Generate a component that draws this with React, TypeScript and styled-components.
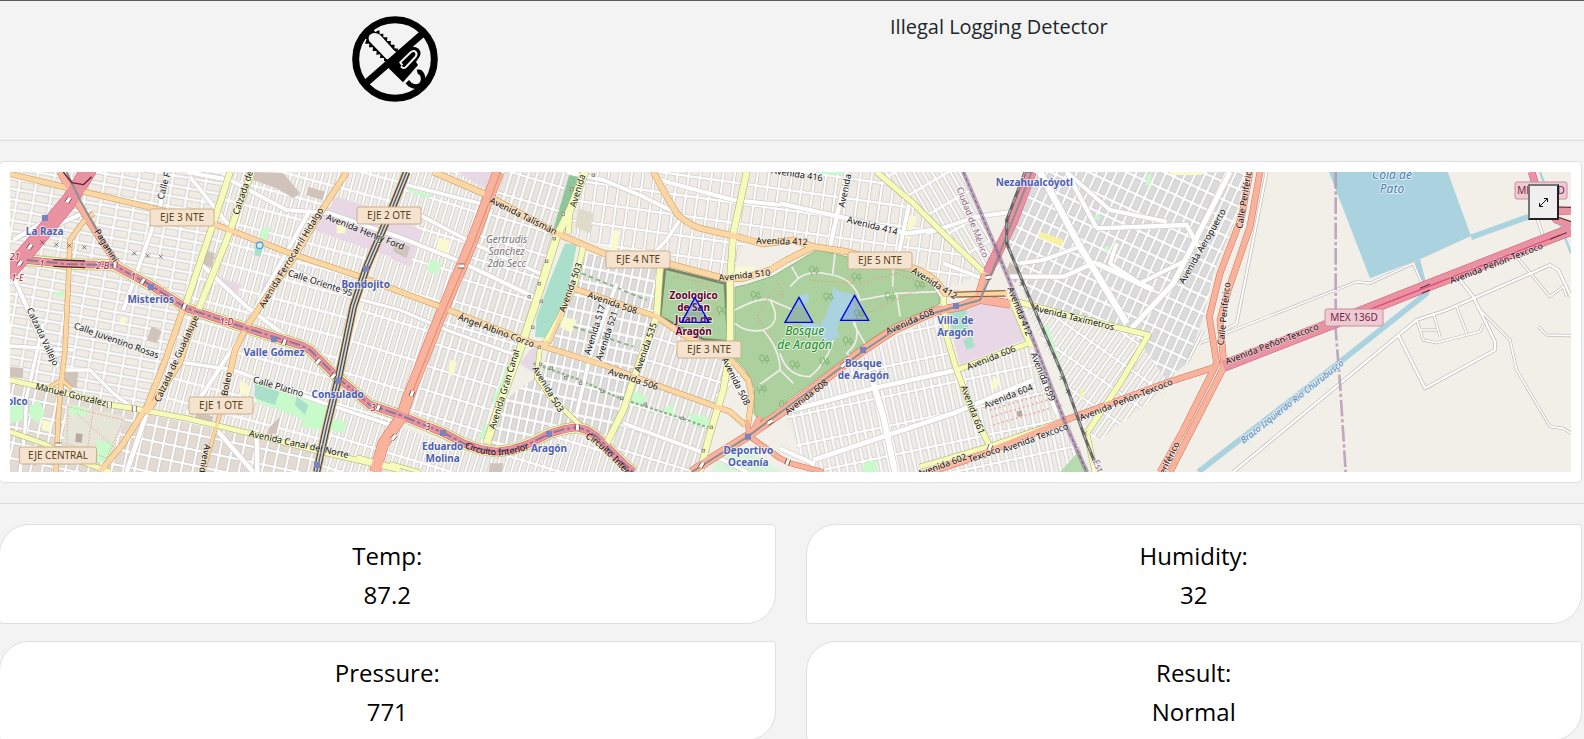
import React from 'react';
import styled, { createGlobalStyle } from 'styled-components';

const GlobalStyle = createGlobalStyle`
  *, *::before, *::after { box-sizing: border-box; }
  body {
    margin: 0;
    background: #f3f3f3;
    color: #212529;
    font-family: "Segoe UI", "Open Sans", "Noto Sans", sans-serif;
    font-size: 16px;
    line-height: 24px;
    overflow-x: hidden;
  }
`;

const Page = styled.main`
  border-top: 1px solid #5c5a5e;
`;

const Header = styled.header`
  display: grid;
  grid-template-columns: 1fr 1fr;
  padding: 14px 0 37px;
`;

const LogoCell = styled.div`
  display: flex;
  justify-content: center;
  padding-right: 2px;
`;

const Logo = styled.svg`
  display: block;
  width: 88px;
  height: 88px;
`;

const Title = styled.h1`
  margin: 0;
  padding-left: 98px;
  font-size: 20px;
  font-weight: 400;
  line-height: 24px;
`;

const Rule = styled.hr`
  margin: 0 0 20px;
  border: 0;
  border-top: 1px solid #dcdcdc;
`;

const Body = styled.div`
  margin: 0 2px 0 -1px;
`;

const MapCard = styled.section`
  position: relative;
  margin-bottom: 20px;
  padding: 10px;
  border: 1px solid #dfdfdf;
  border-radius: 5px;
  background: #fff;
`;

const MapSvg = styled.svg`
  display: block;
  width: 100%;
  height: 300px;
  background: #f2efe9;
  font-family: "Noto Sans", "Open Sans", sans-serif;
`;

const ExpandButton = styled.button`
  position: absolute;
  top: 22px;
  right: 22px;
  display: flex;
  align-items: center;
  justify-content: center;
  width: 31px;
  height: 36px;
  padding: 0;
  border: 2px solid;
  border-color: #767676 #212121 #212121 #767676;
  background: #efefef;
  color: #111;
`;

const Readings = styled.div`
  display: grid;
  grid-template-columns: 1fr 1fr;
  gap: 17px 30px;
`;

const ReadingCard = styled.section`
  padding: 11px 10px 9px;
  border: 1px solid #dfdfdf;
  border-radius: 30px 4px 30px 4px;
  background: #fff;
  color: #000;
  text-align: center;
`;

const ReadingName = styled.h2`
  margin: 0;
  font-size: 24px;
  font-weight: 400;
  line-height: 39px;
`;

const ReadingValue = styled.p`
  margin: 0;
  font-size: 24px;
  line-height: 39px;
`;

type Kind = 'street' | 'track' | 'secondary' | 'primary' | 'trunk' | 'motorway';

const roadColors: Record<Kind, [string, string]> = {
  street: ['#ffffff', '#cfccc8'],
  track: ['#ffffff', '#bdbab6'],
  secondary: ['#f6fabb', '#a9b163'],
  primary: ['#fcd6a4', '#c79a54'],
  trunk: ['#f9b29c', '#d2745a'],
  motorway: ['#e892a2', '#d4577c'],
};

const Line = styled.path`
  fill: none;
  stroke-linejoin: round;
`;

const MapText = styled.text<{ $tone?: string; $size?: number; $bold?: boolean; $italic?: boolean; $halo?: string }>`
  fill: ${(p) => p.$tone ?? '#111'};
  font-size: ${(p) => p.$size ?? 9}px;
  font-weight: ${(p) => (p.$bold ? 700 : 400)};
  font-style: ${(p) => (p.$italic ? 'italic' : 'normal')};
  stroke: ${(p) => p.$halo ?? 'none'};
  stroke-width: 2px;
  stroke-linejoin: round;
  paint-order: stroke;
  text-anchor: middle;
`;

/* Map geometry is stored in thirds of a pixel. */
const UNIT = 3;

const CIRCUITO = 'M80 330L200 342L340 345L450 405L560 475L740 535L900 585L930 600L1010 680L1110 765L1200 795L1330 848L1390 880L1440 897L1490 905L1540 897L1590 880L1650 850L1690 838L1730 832L1760 840L1790 860L1870 940L1900 966';

const roads: [Kind, number, string][] = [
  ['street', 13, 'M45 390L110 540L175 650'],
  ['street', 11, 'M30 588L220 600M500 630L700 660L960 755L1200 835'],
  ['street', 12, 'M560 66L690 90L860 180L990 190L1200 262L1370 330L1600 440'],
  ['street', 10, 'M860 350L1050 440L1200 480L1340 540L1560 620'],
  ['street', 10, 'M190 660L270 660L340 730L400 775M130 520L80 740L75 840L60 966'],
  ['street', 14, 'M440 790L380 966M650 840L760 966M770 840L772 966'],
  ['street', 12, 'M500 66L480 170L370 480M600 340L740 470L860 560L1000 650'],
  ['street', 12, 'M930 180L780 450L740 530M720 560L610 730L560 790'],
  ['street', 12, 'M70 270L270 180M40 270L140 210M570 80L690 230'],
  ['street', 11, 'M1250 190L1440 290L1620 370M1200 100L1480 170'],
  ['street', 12, 'M1700 66L1810 90L1930 140L2030 190M1980 90L2200 150L2340 165'],
  ['street', 11, 'M2045 200L2000 270L1960 310M1850 400L1770 620L1730 790'],
  ['street', 11, 'M1870 820L2170 930L2240 966M2150 740L2280 610M2200 600L2240 690'],
  ['street', 13, 'M2340 160L2540 205L2720 250L2800 240M2540 66L2490 290'],
  ['street', 12, 'M2730 150L2690 340M2780 250L2930 200L3040 185M2830 340L2960 390'],
  ['street', 20, 'M3120 66L3240 290L3380 520'],
  ['street', 13, 'M3030 380L3190 380L3290 335M3290 235L3560 225L3600 300M3290 235L3200 66'],
  ['street', 12, 'M3200 66L3330 180L3500 215M3240 290L3130 330L3060 340M3350 280L3330 340L3420 400L3560 330'],
  ['street', 16, 'M3690 66L3520 400L3390 540M3290 340L3460 420'],
  ['street', 14, 'M2340 790L2620 715L2870 660M2440 930L2860 790L3100 690'],
  ['street', 18, 'M2620 700L2650 800L2685 966'],
  ['street', 12, 'M3095 600L3170 790M2340 895L2440 940L2430 966'],
  ['track', 7, 'M3700 966L4250 510L4340 480L4650 345L4675 360L4713 440'],
  ['track', 7, 'M4195 555L4275 715L4485 600L4485 575L4420 440L4380 390'],
  ['track', 5, 'M3600 580L4070 395L4110 400L4240 340L4270 410'],
  ['track', 5, 'M4430 470L4530 570L4550 660L4650 830L4690 835L4713 850'],
  ['track', 5, 'M4550 320L4650 440L4690 410L4700 440M4615 530L4640 555L4713 557'],
  ['track', 5, 'M4250 510L4270 570L4310 578L4440 545L4450 520M4370 470L4400 550M4260 540L4310 540M4300 490L4320 560'],
  ['track', 6, 'M3800 66L3710 520L3640 560M3610 540L3560 640M4610 200L4630 260'],
  ['secondary', 15, 'M30 690L180 725L330 765L400 775L560 805L750 850L960 905L1200 960'],
  ['secondary', 14, 'M30 845L130 880L230 930L330 966'],
  ['secondary', 18, 'M690 66L640 220L555 470'],
  ['secondary', 18, 'M755 66L680 270L595 480'],
  ['secondary', 22, 'M1755 66L1710 180L1670 260L1610 450L1560 600L1500 760L1460 880'],
  ['secondary', 16, 'M1710 180L1705 250M1750 290L1725 400L1680 500L1630 590'],
  ['secondary', 13, 'M1620 590L1610 680L1650 740L1740 825'],
  ['secondary', 19, 'M1980 350L1970 500L1910 660L1870 780L1820 880'],
  ['secondary', 19, 'M2240 66L2200 250L2190 390L2190 600L2170 720L2130 850L2100 966'],
  ['secondary', 16, 'M2630 66L2740 160L2840 260L2955 370'],
  ['secondary', 16, 'M3030 440L3080 560L3095 590'],
  ['secondary', 16, 'M2830 440L2840 560L2870 660L2920 790L2970 890'],
  ['secondary', 15, 'M2870 660L3090 578'],
  ['secondary', 16, 'M3050 455L3240 505L3445 555L3360 700L3260 850L3285 966'],
  ['secondary', 14, 'M2760 950L2980 885L3210 805'],
  ['secondary', 10, 'M1200 955L1070 920M1170 940L1260 966'],
  ['primary', 15, 'M30 72L230 120L450 172L650 225L870 310L1080 380L1200 425L1320 470L1600 580L1810 645L2010 720L2190 785L2235 825'],
  ['primary', 13, 'M280 190L250 215L210 270L205 400L195 600L185 690L175 800L168 966'],
  ['primary', 10, 'M150 710L185 690L215 715'],
  ['primary', 16, 'M550 475L500 620L440 770L370 880L300 966'],
  ['primary', 14, 'M590 490L540 640L440 790'],
  ['primary', 16, 'M1040 66L960 190L890 310L800 440L740 530L705 600L690 670'],
  ['primary', 9, 'M690 670L670 760L640 860L610 966'],
  ['primary', 17, 'M1300 66L1450 130L1670 250L1810 310L2020 345L2170 385L2230 385L2310 360L2360 330L2440 290'],
  ['primary', 17, 'M1960 66L1995 130L2030 190Q2060 222 2100 235L2230 265L2290 282L2380 270L2440 290L2540 305L2730 352Q2800 370 2835 430L2880 433L3020 430'],
  ['primary', 15, 'M1720 415L1970 500L2050 555L2190 625L2245 690L2255 740L2245 820'],
  ['primary', 10, 'M1720 415L1680 500L1650 575L1615 582'],
  ['trunk', 18, 'M180 66L240 170L290 250L350 340'],
  ['trunk', 32, 'M1495 66L1410 290L1320 500L1225 740L1205 800L1150 880L1125 966'],
  ['trunk', 24, 'M3030 462L2940 448L2880 470L2800 485L2680 540L2590 600L2340 790L2240 860L2120 935L2075 966'],
  ['trunk', 14, 'M2240 810L2250 860L2340 925L2370 940L2470 966M2280 800L2250 860'],
  ['trunk', 18, 'M2955 370L2930 450'],
  ['trunk', 17, 'M2760 976L2900 930L3040 875L3210 805L3510 695L3650 650'],
  ['trunk', 17, 'M3750 66L3725 200L3660 370L3628 500L3650 640L3550 840L3480 966'],
  ['trunk', 17, 'M3780 66L3750 230L3685 420L3660 510L3672 650L3580 830L3510 966'],
  ['motorway', 46, 'M268 56L210 150L110 270L20 375'],
  ['motorway', 20, CIRCUITO],
  ['motorway', 28, 'M3095 66L3040 210L2962 370'],
  ['motorway', 32, 'M3670 648L3960 535L4130 468L4270 412L4680 252L4713 240'],
  ['motorway', 20, 'M4595 66L4620 150L4670 210L4713 225M4640 185L4713 182'],
];

interface GridProps { id: string; angle: number; w: number; h: number; block: string }

const grids: GridProps[] = [
  { id: 'west', angle: 10, w: 50, h: 31, block: '#f0ece5' },
  { id: 'centre', angle: 15, w: 23, h: 62, block: '#efebe4' },
  { id: 'southwest', angle: 12, w: 34, h: 46, block: '#e3dad1' },
  { id: 'rail', angle: 17, w: 22, h: 96, block: '#ede9e3' },
  { id: 'canal', angle: 17, w: 25, h: 70, block: '#e9e6e1' },
  { id: 'dense', angle: 12, w: 24, h: 44, block: '#dedcda' },
  { id: 'north', angle: 8, w: 34, h: 60, block: '#efebe4' },
  { id: 'slope', angle: -30, w: 24, h: 80, block: '#eeebe6' },
  { id: 'south', angle: -12, w: 25, h: 88, block: '#efece7' },
  { id: 'neza', angle: 25, w: 27, h: 48, block: '#dcdbdc' },
  { id: 'taxi', angle: 35, w: 24, h: 76, block: '#efece6' },
];

const districts: [string, string][] = [
  ['west', '30,66 690,66 560,470 430,780 380,800 30,690'],
  ['southwest', '30,690 430,790 960,905 930,966 30,966'],
  ['centre', '690,66 1220,66 1098,356 1014,690 960,905 430,780 560,470'],
  ['rail', '1220,66 1495,66 1320,500 1170,860 1135,966 950,966 1014,690'],
  ['canal', '1495,66 1755,66 1560,600 1460,880 1400,870 1220,780 1320,500'],
  ['rail', '1135,966 1170,820 1400,900 1730,850 1890,966'],
  ['north', '1755,66 1960,66 2100,235 2240,265 2190,385 1990,340 1690,250'],
  ['dense', '1760,310 1980,350 1970,500 1870,780 1820,880 1740,825 1620,680 1650,580'],
  ['dense', '1500,760 1610,680 1730,825 1490,890 1440,880'],
  ['north', '1960,66 2630,66 2955,370 2835,420 2730,352 2440,290 2230,265 2100,235'],
  ['canal', '1970,510 2180,630 2160,780 2100,966 1900,966 1820,880'],
  ['slope', '2630,66 2890,66 3010,350 2955,370'],
  ['south', '2360,800 2600,610 2800,500 2840,560 2970,890 2760,966 2420,966'],
  ['south', '2870,660 3095,590 3200,805 2970,885'],
  ['south', '2980,900 3210,820 3270,966 2780,966'],
  ['neza', '3110,66 3700,66 3390,540 3080,450 3020,280'],
  ['taxi', '3070,460 3445,555 3270,850'],
  ['taxi', '3445,555 3530,690 3300,870 3260,850'],
  ['neza', '3690,66 3735,66 3710,200 3640,370 3610,500 3560,640 3500,690 3390,540'],
];

const areas: [string, string][] = [
  ['#e8d8e6', '1010,140 1200,200 1200,330 940,240'],
  ['#e8d8e6', '1370,66 1490,66 1462,120'],
  ['#e8d8e6', '1190,200 1265,240 1230,350 1170,325'],
  ['#e8d8e6', '645,375 725,405 700,445'],
  ['#e8d8e6', '870,330 830,400 780,440 790,400'],
  ['#e8d8e6', '1590,600 1615,590 1615,680 1560,640'],
  ['#e8d8e6', '2840,490 2950,458 3030,470 3085,565 2880,645'],
  ['#aae0cb', '1695,280 1730,285 1705,420 1650,565 1605,560 1610,500 1650,390'],
  ['#aae0cb', '2850,480 2900,480 2905,540 2855,565'],
  ['#aae0cb', '2890,570 2915,558 2925,590 2900,600'],
  ['#8fc59a', '1710,66 1740,66 1680,240 1660,240'],
  ['#c8facc', '765,700 980,770 965,835 840,780 770,755'],
  ['#aae0cb', '765,702 838,725 825,765 765,745'],
  ['#aae0cb', '890,740 925,765 915,795 885,765'],
  ['#c8facc', '910,808 965,820 962,840 905,830'],
  ['#c8facc', '990,805 1040,815 1030,850 985,840'],
  ['#c8facc', '780,240 810,232 800,270 785,270'],
  ['#aae0cb', '765,290 790,290 782,320 762,315'],
  ['#c8facc', '165,425 198,422 198,440 170,440'],
  ['#c8facc', '30,750 70,750 70,810 30,820'],
  ['#c8facc', '90,770 115,750 135,790 115,820 88,800'],
  ['#e6e6d8', '200,760 380,800 320,940 190,880'],
  ['#c8facc', '290,870 340,880 320,940 290,935'],
  ['#c8facc', '210,765 265,775 255,800 205,790'],
  ['#c8facc', '1525,640 1540,640 1500,760 1475,760'],
  ['#c8facc', '1460,820 1475,825 1450,870 1435,860'],
  ['#c8facc', '1225,115 1290,135 1288,147 1225,125'],
  ['#c8facc', '1290,330 1325,340 1310,375 1280,360'],
  ['#c8facc', '1900,720 1940,740 1930,770 1895,760'],
  ['#c8facc', '2065,790 2120,800 2135,830 2080,825'],
  ['#c8facc', '1995,770 2020,765 2020,800 1995,790'],
  ['#c8facc', '2590,940 2630,930 2630,966 2590,966'],
  ['#b5dcae', '3180,966 3240,900 3265,966'],
  ['#c8facc', '3130,525 3145,530 3200,700 3190,710'],
  ['#c8facc', '2460,66 2540,66 2540,75 2460,72'],
  ['#c8facc', '3440,75 3455,70 3450,110 3438,105'],
  ['#c8facc', '3285,195 3298,193 3298,208 3286,210'],
  ['#c8facc', '3315,290 3327,288 3327,302 3316,304'],
  ['#c8facc', '3222,250 3245,290 3250,320 3230,290'],
  ['#d8f5dc', '2130,966 2160,910 2240,890 2340,966'],
  ['#cfc3bb', '765,66 850,70 900,130 880,145 830,115 760,90'],
  ['#cfc3bb', '925,110 975,125 965,150 920,135'],
  ['#cfc3bb', '612,300 645,310 635,355 605,340'],
  ['#cfc3bb', '455,530 485,542 470,580 440,570'],
  ['#cfc3bb', '195,660 235,665 230,715 195,705'],
  ['#cfc3bb', '30,650 70,655 68,685 30,680'],
  ['#cfc3bb', '810,830 840,800 830,850 800,855'],
  ['#cfc3bb', '590,780 640,800 635,815 585,805'],
  ['#cfc3bb', '1470,940 1510,940 1505,966 1465,966'],
  ['#cfc3bb', '3030,335 3065,370 3045,400 3020,360'],
  ['#cfc3bb', '1180,270 1230,290 1220,325 1180,305'],
  ['#b8a8a0', '3050,785 3065,780 3068,798 3053,800'],
  ['#b8a8a0', '228,850 248,852 245,878 226,875'],
  ['#dfdbca', '1735,175 1780,190 1770,250 1725,230'],
  ['#fafad0', '1840,240 1860,245 1850,300 1830,300'],
  ['#fafad0', '2210,350 2270,350 2230,380 2200,370'],
  ['#fafad0', '2725,195 2750,200 2730,270 2705,260'],
  ['#f8f2a0', '3120,245 3190,270 3185,290 3115,262'],
  ['#f8f2a0', '3240,725 3250,715 3250,740 3242,745'],
  ['#fafad0', '1315,265 1350,270 1340,320 1305,310'],
  ['#fafad0', '1350,630 1370,635 1360,680 1345,670'],
  ['#fafad0', '1690,500 1730,510 1715,550 1680,530'],
  ['#fafad0', '1010,220 1040,225 1035,250 1010,250'],
  ['#fafad0', '365,500 380,505 375,525 358,515'],
  ['#fafad0', '720,690 750,710 745,740 720,730'],
  ['#fafad0', '125,810 155,815 150,845 125,840'],
  ['#fafad0', '2980,680 2998,690 2990,720 2975,710'],
  ['#fafad0', '3510,66 3610,66 3605,75 3510,75'],
  ['#aad3df', '3987,66 4343,66 4413,258 4260,328 4110,385'],
];

const BOSQUE = 'M2205 412L2240 404L2320 378L2370 348L2450 300L2530 318L2730 366L2790 398L2818 440L2818 462L2680 524L2580 590L2340 768L2285 820L2262 790L2264 715L2240 665L2205 625Z';

const trees: [number, number][] = [
  [2265, 437], [2440, 362], [2568, 382], [2757, 405], [2668, 440], [2483, 442], [2575, 492],
  [2542, 574], [2472, 635], [2382, 645], [2291, 628], [2283, 717], [2163, 482], [2350, 765],
];

/* Text, start x/y, end x/y in map units. */
const roadLabels: [string, number, number, number, number][] = [
  ['Paganini', 290, 240, 348, 334],
  ['Calle F', 482, 145, 502, 70],
  ['Calzada de', 708, 190, 750, 66],
  ['Avenida Henry Ford', 980, 200, 1212, 292],
  ['Avenida Ferrocarril Hidalgo', 785, 468, 962, 178],
  ['Calle Oriente 95', 866, 368, 1056, 430],
  ['Calle Juventino Rosas', 225, 527, 473, 616],
  ['Calzada Vallejo', 88, 476, 168, 644],
  ['Calzada de Guadalupe', 472, 752, 588, 500],
  ['Manuel González', 107, 708, 318, 760],
  ['Boleo', 673, 735, 686, 668],
  ['Calle Platino', 760, 688, 910, 732],
  ['Avenida Canal del Norte', 748, 850, 1045, 915],
  ['Avenid', 623, 885, 607, 966],
  ['Avenida Talismán', 1472, 150, 1668, 246],
  ['Avenida', 1718, 170, 1748, 74],
  ['Avenida 503', 1686, 485, 1738, 340],
  ['Avenida 508', 1765, 434, 1910, 484],
  ['Avenida 517', 1762, 612, 1808, 466],
  ['Avenida 521', 1797, 628, 1844, 486],
  ['Avenida 535', 1912, 664, 1962, 520],
  ['Avenida 510', 2157, 384, 2310, 368],
  ['Avenida 412', 2270, 272, 2422, 276],
  ['Ángel Albino Corzo', 1375, 500, 1602, 584],
  ['Avenida Gran Canal', 1476, 836, 1550, 600],
  ['Avenida 503', 1606, 655, 1682, 780],
  ['Avenida 506', 1826, 663, 1974, 712],
  ['Avenida 508', 2175, 630, 2240, 758],
  ['Avenida 416', 2318, 62, 2464, 84],
  ['Avenida', 2524, 174, 2545, 70],
  ['Avenida 414', 2542, 208, 2692, 246],
  ['Avenida 608', 2660, 545, 2800, 484],
  ['Avenida 608', 2358, 788, 2480, 694],
  ['Avenida 412', 2738, 360, 2868, 440],
  ['Avenida 412', 3030, 412, 3088, 556],
  ['Avenida Taxímetros', 3102, 473, 3342, 532],
  ['Avenida 606', 2902, 652, 3045, 595],
  ['Avenida 604', 2953, 768, 3097, 710],
  ['Avenida 699', 3100, 608, 3158, 752],
  ['Avenida 661', 2890, 706, 2946, 852],
  ['Avenida 602', 2756, 972, 2897, 920],
  ['Texcoco', 2905, 930, 3000, 897],
  ['Avenida Texcoco', 3010, 900, 3202, 828],
  ['Avenida Peñón-Texcoco', 3238, 805, 3518, 694],
  ['Avenida Peñón-Texcoco', 3676, 636, 3956, 528],
  ['Avenida Peñón-Texcoco', 4350, 394, 4628, 286],
  ['Calle Periféric', 3718, 234, 3746, 66],
  ['Calle Periférico', 3662, 582, 3682, 400],
  ['Avenida Aeropuerto', 3545, 398, 3670, 180],
  ['eriférico', 3485, 972, 3532, 876],
];

const refLabels: [string, number, number][] = [
  ['21', 44, 318], ['1', 126, 340], ['2-B', 308, 346], ['1-E', 52, 382],
  ['1', 400, 378], ['1-D', 680, 514], ['3', 1120, 772], ['3', 1284, 828],
];

const stations: [string[], number, number, number, number][] = [
  [['La Raza'], 134, 243, 135, 204],
  [['Misterios'], 452, 448, 453, 411],
  [['Bondojito'], 1097, 402, 1098, 356],
  [['Valle Gómez'], 822, 607, 822, 567],
  [['Consulado'], 1013, 731, 1014, 692],
  [['Eduardo', 'Molina'], 1328, 888, 1329, 849],
  [['Aragón'], 1647, 893, 1647, 852],
  [['Deportivo', 'Oceanía'], 2245, 901, 2244, 860],
  [['Bosque', 'de Aragón'], 2590, 640, 2589, 600],
  [['Villa de', 'Aragón'], 2866, 509, 2868, 468],
  [['Nezahualcóyotl'], 3103, 95, 3090, 60],
  [['olco'], 52, 752, 0, 752],
];

const shields: [string, number, number, number, boolean][] = [
  ['EJE 3 NTE', 547, 202, 64, false],
  ['EJE 2 OTE', 1168, 195, 64, false],
  ['EJE 1 OTE', 664, 765, 64, false],
  ['EJE CENTRAL', 174, 915, 77, false],
  ['EJE 4 NTE', 1915, 327, 64, false],
  ['EJE 3 NTE', 2128, 597, 64, false],
  ['EJE 5 NTE', 2639, 331, 64, false],
  ['MEX 136D', 4063, 502, 58, true],
  ['MEX 136D', 4624, 120, 52, true],
];

const crossings: [number, number, number][] = [
  [205, 150, 35], [90, 290, 35], [60, 340, 35], [345, 345, 0], [428, 394, 30], [553, 470, 20],
  [853, 576, 20], [955, 634, 40], [1000, 678, 40], [1135, 773, 20], [1384, 348, 90], [1236, 731, 20],
  [1181, 862, 40], [1732, 832, 0], [2105, 945, 30], [2310, 816, 60], [2530, 645, 50], [2965, 382, 80],
  [2363, 936, 20], [2970, 892, 20], [403, 776, 0], [328, 764, 0], [175, 885, 90],
];

const sensors = ['M2085 443L2045 517L2127 517Z', 'M2397 442L2355 517L2438 517Z', 'M2564 436L2522 511L2606 511Z'];

function StreetGrid({ id, angle, w, h, block }: GridProps) {
  const path = `M${w / 2} 0V${h}M0 ${h / 2}H${w}`;
  return (
    <pattern id={id} width={w} height={h} patternUnits="userSpaceOnUse" patternTransform={`rotate(${angle})`}>
      <rect width={w} height={h} fill={block} />
      <Line d={path} stroke="#c4c1bf" strokeWidth={11} />
      <Line d={path} stroke="#fff" strokeWidth={7} />
    </pattern>
  );
}

function RoadLabel({ text, from, to, tone, italic, halo, size }: {
  text: string; from: [number, number]; to: [number, number];
  tone?: string; italic?: boolean; halo?: string; size?: number;
}) {
  const x = (from[0] + to[0]) / 2 / UNIT;
  const y = (from[1] + to[1]) / 2 / UNIT;
  const angle = (Math.atan2(to[1] - from[1], to[0] - from[0]) * 180) / Math.PI;
  return (
    <MapText $tone={tone} $italic={italic} $halo={halo} $size={size} dy={3} transform={`translate(${x} ${y}) rotate(${angle})`}>
      {text}
    </MapText>
  );
}

function PlaceLabel({ lines, x, y, tone, size = 10, bold, italic, pitch = 12 }: {
  lines: string[]; x: number; y: number; tone: string; size?: number; bold?: boolean; italic?: boolean; pitch?: number;
}) {
  return (
    <>
      {lines.map((line, i) => (
        <MapText key={line} x={x / UNIT} y={y / UNIT + 4 + i * pitch} $tone={tone} $size={size} $bold={bold} $italic={italic} $halo="rgba(255,255,255,0.65)">
          {line}
        </MapText>
      ))}
    </>
  );
}

function StreetMap() {
  return (
    <MapSvg viewBox="0 0 1561 300" preserveAspectRatio="xMidYMid slice" role="img" aria-label="Sensor map">
      <defs>
        {grids.map((g) => <StreetGrid key={g.id} {...g} />)}
        <path id="circuito-west" d="M451 274Q487 292 523 275" />
        <path id="circuito-east" d="M569 263Q590 271 622 310" />
      </defs>
      <g transform="translate(-10 -22)">
        <g transform={`scale(${1 / UNIT})`}>
          {districts.map(([grid, points]) => <polygon key={points} points={points} fill={`url(#${grid})`} />)}
          {areas.map(([fill, points]) => <polygon key={points} points={points} fill={fill} />)}
          <Line d="M205 770L370 810L320 925L200 880ZM230 790L350 900M280 780L260 910" stroke="#f29a90" strokeWidth={3} strokeDasharray="4 5" />
          <Line d="M2970 780L3170 720M2975 800L3175 740M2980 825L3185 765" stroke="#f2a59a" strokeWidth={5} strokeDasharray="5 9" />
          <Line d="M1600 640L1740 690L1860 745L2060 810L2130 835" stroke="#8fb58a" strokeWidth={7} strokeDasharray="9 6" />
          <Line d="M1745 370L1940 450M1720 530L1900 590" stroke="#8fb58a" strokeWidth={6} strokeDasharray="14 9" />
          <Line d="M4413 262L4585 200M4252 330L4270 400L4280 430L4040 620L3595 966" stroke="#aad3df" strokeWidth={17} />
          <Line d="M4620 66L4713 310" stroke="#aad3df" strokeWidth={7} />

          {roads.filter(([k]) => k === 'street' || k === 'track').map(([kind, width, d]) => (
            <Line key={d} d={d} stroke={roadColors[kind][1]} strokeWidth={width + 4} />
          ))}
          {roads.filter(([k]) => k === 'street' || k === 'track').map(([kind, width, d]) => (
            <Line key={d} d={d} stroke={roadColors[kind][0]} strokeWidth={width} />
          ))}

          <path d="M1995 355L2175 400L2185 575L2110 568L1980 500Z" fill="#add19e" stroke="#79866a" strokeWidth={8} />
          <path d={BOSQUE} fill="#add19e" stroke="#8cba80" strokeWidth={3} />
          <path d="M2500 412L2522 425L2555 432L2566 470L2575 500L2520 512L2510 540L2520 560L2480 578L2462 560L2410 545L2405 520L2460 525L2475 500L2490 460Z" fill="#aad3df" />
          <path d="M2400 435L2425 432L2428 450L2400 475L2390 460Z" fill="#aad3df" />
          <Line d="M2375 350L2395 385L2370 410M2395 385Q2430 360 2480 372Q2560 380 2580 450L2690 430L2810 425M2505 310L2498 372M2680 340L2678 410M2690 430L2700 500M2560 510Q2590 570 2540 610L2580 640M2205 480Q2280 440 2310 450Q2350 520 2290 540Q2240 550 2205 520M2310 450L2380 480M2290 540Q2340 600 2340 660L2380 700M2270 710L2340 660M2340 610Q2360 680 2430 680Q2480 640 2500 570M2560 520L2600 590" stroke="#f2ecea" strokeWidth={5} />
          <Line d="M2330 390L2350 440L2320 420L2270 500L2310 560M2430 390L2560 400L2540 370M2580 400L2690 370L2800 410M2600 490L2750 420M2020 380L2120 400L2150 470L2110 540M2010 440L2060 500L2100 400" stroke="#eb9a86" strokeWidth={3} strokeDasharray="5 6" />
          {trees.map(([x, y]) => (
            <g key={`${x}-${y}`} transform={`translate(${x} ${y})`} fill="none" stroke="#86b57a" strokeWidth={3}>
              <ellipse cx={-5} cy={-4} rx={7} ry={9} />
              <path d="M-5 5V14M10 -12L3 4H17ZM10 4V12" />
            </g>
          ))}

          <Line d={CIRCUITO} stroke="#b9bf75" strokeWidth={34} />
          <Line d={CIRCUITO} stroke="#f6fabb" strokeWidth={30} />
          {roads.filter(([k]) => k !== 'street' && k !== 'track').map(([kind, width, d]) => (
            <Line key={d} d={d} stroke={roadColors[kind][1]} strokeWidth={width + 3} />
          ))}
          {roads.filter(([k]) => k !== 'street' && k !== 'track').map(([kind, width, d]) => (
            <Line key={d} d={d} stroke={roadColors[kind][0]} strokeWidth={width} />
          ))}
          <Line d="M2860 427L3015 422M2860 441L3015 438" stroke="#7a5a35" strokeWidth={3} />
          <Line d="M4100 482L4680 255" stroke="#e0487c" strokeWidth={4} />
          <Line d="M4260 415L4290 402M4265 430L4290 420M4650 170L4713 172M4640 190L4713 215M4650 268L4700 248" stroke="#4a2a35" strokeWidth={3} />
          <Line d="M1502 66L1417 290L1327 500L1232 740" stroke="#d2745a" strokeWidth={2} />
          <Line d="M200 66L240 150L290 240L345 330M2075 966L2240 862L2590 603L2680 543L2800 490L2940 450L2975 370L3095 66" stroke="#8f8f8f" strokeWidth={6} />
          <Line d={CIRCUITO} stroke="#8b7b88" strokeWidth={6} strokeDasharray="34 8 10 8" />
          <Line d="M160 329L255 333M160 349L255 353" stroke="#5b2434" strokeWidth={4} />
          <Line d="M190 66L215 98L250 104L275 80" stroke="#5b2434" strokeWidth={4} />

          <Line d="M1220 66L1180 165L1098 356L1060 470L1014 690L980 830L950 966" stroke="#c79a54" strokeWidth={25} />
          <Line d="M1220 66L1180 165L1098 356L1060 470L1014 690L980 830L950 966" stroke="#3f3f3f" strokeWidth={20} />
          <Line d="M1220 66L1180 165L1098 356L1060 470L1014 690L980 830L950 966" stroke="#d6d6d6" strokeWidth={14} />
          <Line d="M1220 66L1180 165L1098 356L1060 470L1014 690L980 830L950 966" stroke="#555" strokeWidth={4} />

          <Line d="M3075 66L3020 210L3020 280L3070 400L3190 680L3250 850L3285 940" stroke="#666" strokeWidth={9} />
          <Line d="M3075 66L3020 210L3020 280L3070 400L3190 680L3250 850L3285 940" stroke="#aaa" strokeWidth={4} strokeDasharray="20 20" />
          <Line d="M2890 66L2990 300L3100 570L3200 830L3260 966" stroke="#9a789b" strokeOpacity={0.6} strokeWidth={13} />
          <Line d="M2890 66L2990 300L3100 570L3200 830L3260 966" stroke="#7c5880" strokeWidth={3} strokeDasharray="12 6" />
          <Line d="M4007 66V540L4020 700L4037 966" stroke="#b496b4" strokeOpacity={0.8} strokeWidth={8} strokeDasharray="50 8 10 8" />
          {[[127, 277], [169, 284], [208, 287], [253, 292], [403, 310], [443, 317], [482, 320], [3022, 214], [3022, 279], [3065, 402], [3185, 684], [3203, 724], [3255, 850]].map(([x, y]) => (
            <Line key={`${x}-${y}`} d={`M${x - 6} ${y - 6}l12 12m0 -12l-12 12`} stroke="#444" strokeWidth={2} />
          ))}
          {[[1715, 118], [1690, 192], [1663, 266], [1640, 334], [1618, 401], [1588, 440], [1624, 454], [1598, 532], [1618, 592], [1622, 643], [1654, 655], [1697, 683], [1742, 700], [1807, 724], [1865, 745], [1936, 763], [2047, 805], [2134, 832], [2110, 902], [1780, 76]].map(([x, y]) => (
            <rect key={`${x}-${y}`} x={x - 4} y={y - 4} width={8} height={8} fill="#ddd" stroke="#777" strokeWidth={2} />
          ))}
          <circle cx={779} cy={286} r={10} fill="#d7ebf7" stroke="#4aa5e8" strokeWidth={4} />
          {crossings.map(([x, y, a]) => (
            <g key={`${x}-${y}`} transform={`translate(${x} ${y}) rotate(${a})`}>
              <rect x={-5} y={-8} width={10} height={16} fill="#fff" />
              <Line d="M-6 -9V9M6 -9V9" stroke="#4d3434" strokeWidth={2} />
            </g>
          ))}
          {stations.map(([, , , x, y]) => <rect key={`${x}-${y}`} x={x - 9} y={y - 9} width={18} height={18} fill="#7a83bd" />)}
          <rect x={942} y={936} width={18} height={18} fill="#7a83bd" />
        </g>

        {roadLabels.map(([text, x1, y1, x2, y2]) => (
          <RoadLabel key={`${text}-${x1}`} text={text} from={[x1, y1]} to={[x2, y2]} halo="rgba(255,255,255,0.35)" />
        ))}
        <RoadLabel text="Ciudad de México" from={[2873, 100]} to={[2962, 334]} tone="#8a6a8c" halo="#f7f4f0" />
        <RoadLabel text="Est" from={[3286, 930]} to={[3302, 966]} tone="#8a6a8c" halo="#f7f4f0" />
        <RoadLabel text="Brazo Izquierdo Río Churubusco" from={[3708, 888]} to={[4044, 622]} tone="#4d80b3" italic halo="#e4eef2" size={9} />
        {refLabels.map(([text, x, y]) => <PlaceLabel key={`${text}-${x}`} lines={[text]} x={x} y={y} tone="#a8182c" size={9} italic />)}
        <PlaceLabel lines={['Gertrudis', 'Sanchez', '2da Secc']} x={1520} y={267} tone="#777" italic />
        <PlaceLabel lines={['Zoologico', 'de San', 'Juan de', 'Aragón']} x={2081} y={435} tone="#660033" bold />
        <PlaceLabel lines={['Bosque', 'de Aragón']} x={2414} y={543} tone="#158a1c" size={12} italic pitch={14} />
        <PlaceLabel lines={['Cola de', 'Pato']} x={4176} y={76} tone="#4d80b3" size={12} italic pitch={14} />
        {stations.map(([lines, x, y]) => <PlaceLabel key={lines.join()} lines={lines} x={x} y={y} tone="#4d5fb0" bold />)}
        {shields.map(([text, x, y, w, toll]) => (
          <g key={`${text}-${x}`} transform={`translate(${Math.round(x / UNIT)} ${Math.round(y / UNIT)})`}>
            <rect x={-w / 2} y={-8} width={w} height={17} rx={2} fill={toll ? '#edcbd2' : '#f4e3cf'} stroke={toll ? '#cc8c9e' : '#cfae8c'} />
            <MapText $size={10} $tone={toll ? '#7c1d47' : '#5b4118'} y={4}>{text}</MapText>
          </g>
        ))}
        <g transform={`scale(${1 / UNIT})`}>
          {sensors.map((d) => <path key={d} d={d} fill="rgba(70,90,190,0.22)" stroke="#0000f0" strokeWidth={4} />)}
        </g>
      </g>
      <MapText><textPath href="#circuito-west" startOffset="50%">Circuito Interior</textPath></MapText>
      <MapText><textPath href="#circuito-east" startOffset="50%">Circuito Interi</textPath></MapText>
    </MapSvg>
  );
}

function NoChainsawLogo() {
  return (
    <Logo viewBox="63 45 264 264" role="img" aria-label="No chainsaws">
      <circle cx={195} cy={177} r={118} fill="none" stroke="#000" strokeWidth={21} />
      <path d="M106 251L282 97" stroke="#000" strokeWidth={21} />
      <path d="M172 176l2 10l-12 -3l0 -9l-12 0l1 -11l-12 1l1 -11l-12 0l1 -11l-12 0l1 -11l-13 0l5 -13l-10 -5l11 -8l-1 -10l13 2l5 -9l8 8l12 -6l1 12l11 -1l0 11l12 0l-1 11l12 0l-1 11l12 0l-1 11l12 1l-4 12l-10 -8L150 104Q134 94 122 103Q112 110 118 124L170 178Z" fill="#000" />
      <path d="M175 193L214 158L232 145Q250 135 266 146Q276 158 268 171L258 186L264 195L219 247L176 205Z" fill="#000" />
      <path d="M217 196L211 187L242 157Q251 150 257 156Q263 163 256 171L226 203Q218 206 213 199" fill="none" stroke="#f3f3f3" strokeWidth={6} />
      <path d="M262 216Q272 213 277 225Q284 243 272 255Q256 265 240 254L232 245" fill="none" stroke="#000" strokeWidth={14} />
    </Logo>
  );
}

const readings = [
  { name: 'Temp:', value: '87.2' },
  { name: 'Humidity:', value: '32' },
  { name: 'Pressure:', value: '771' },
  { name: 'Result:', value: 'Normal' },
];

export default function App() {
  return (
    <>
      <GlobalStyle />
      <Page>
        <Header>
          <LogoCell><NoChainsawLogo /></LogoCell>
          <Title>Illegal Logging Detector</Title>
        </Header>
        <Rule />
        <Body>
          <MapCard>
            <StreetMap />
            <ExpandButton type="button" aria-label="Expand map">
              <svg width="11" height="11" viewBox="0 0 11 11" fill="none" stroke="currentColor" aria-hidden="true">
                <path d="M2 9L9 2M6 1.5H9.5V5M1.5 6V9.5H5" />
              </svg>
            </ExpandButton>
          </MapCard>
        </Body>
        <Rule />
        <Body>
          <Readings>
            {readings.map((r) => (
              <ReadingCard key={r.name}>
                <ReadingName>{r.name}</ReadingName>
                <ReadingValue>{r.value}</ReadingValue>
              </ReadingCard>
            ))}
          </Readings>
        </Body>
      </Page>
    </>
  );
}
